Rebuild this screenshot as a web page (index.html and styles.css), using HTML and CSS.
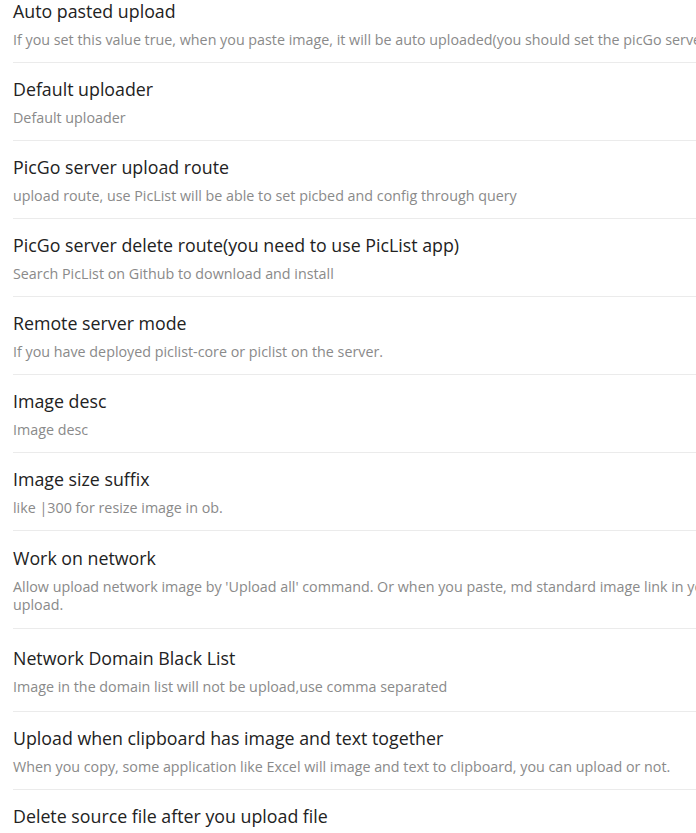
FILE: index.html
```html
<!DOCTYPE html>
<html lang="en">
<head>
<meta charset="utf-8">
<title>Settings</title>
<link rel="stylesheet" href="styles.css">
</head>
<body>
<div class="settings">
  <div class="setting-item">
    <div class="info">
      <div class="name">Auto pasted upload</div>
      <div class="desc">If you set this value true, when you paste image, it will be auto uploaded(you should set the picGo server rightly)</div>
    </div>
  </div>
  <div class="setting-item">
    <div class="info">
      <div class="name">Default uploader</div>
      <div class="desc">Default uploader</div>
    </div>
  </div>
  <div class="setting-item">
    <div class="info">
      <div class="name">PicGo server upload route</div>
      <div class="desc">upload route, use PicList will be able to set picbed and config through query</div>
    </div>
  </div>
  <div class="setting-item">
    <div class="info">
      <div class="name">PicGo server delete route(you need to use PicList app)</div>
      <div class="desc">Search PicList on Github to download and install</div>
    </div>
  </div>
  <div class="setting-item">
    <div class="info">
      <div class="name">Remote server mode</div>
      <div class="desc">If you have deployed piclist-core or piclist on the server.</div>
    </div>
  </div>
  <div class="setting-item">
    <div class="info">
      <div class="name">Image desc</div>
      <div class="desc">Image desc</div>
    </div>
  </div>
  <div class="setting-item">
    <div class="info">
      <div class="name">Image size suffix</div>
      <div class="desc">like |300 for resize image in ob.</div>
    </div>
  </div>
  <div class="setting-item two-line">
    <div class="info">
      <div class="name">Work on network</div>
      <div class="desc">Allow upload network image by 'Upload all' command. Or when you paste, md standard image link in your clipboard will be auto<br>upload.</div>
    </div>
  </div>
  <div class="setting-item with-textarea">
    <div class="info">
      <div class="name">Network Domain Black List</div>
      <div class="desc">Image in the domain list will not be upload,use comma separated</div>
    </div>
  </div>
  <div class="setting-item">
    <div class="info">
      <div class="name">Upload when clipboard has image and text together</div>
      <div class="desc">When you copy, some application like Excel will image and text to clipboard, you can upload or not.</div>
    </div>
  </div>
  <div class="setting-item">
    <div class="info">
      <div class="name">Delete source file after you upload file</div>
      <div class="desc">Delete source file in ob assets after you upload file.</div>
    </div>
  </div>
</div>
</body>
</html>
```

FILE: styles.css
```css
html, body {
  margin: 0;
  padding: 0;
  background: #ffffff;
  overflow: hidden;
}

body {
  font-family: "Open Sans", "Noto Sans", "Liberation Sans", sans-serif;
  color: #222222;
}

.settings {
  width: 1000px;
  margin-top: -16px;
  padding-left: 13px;
}

.setting-item {
  box-sizing: border-box;
  display: flex;
  align-items: center;
  min-height: 78px;
  padding: 14px 0 13px;
  border-top: 1px solid #ebebeb;
}

.setting-item.two-line {
  min-height: 98px;
}

.setting-item.with-textarea {
  min-height: 83px;
}

.info {
  flex: 1;
  min-width: 0;
}

.name {
  font-size: 17.8px;
  line-height: 24px;
  color: #222222;
  white-space: nowrap;
}

.desc {
  margin-top: 8px;
  font-size: 14.3px;
  line-height: 18px;
  color: #8a8a8a;
  white-space: nowrap;
}
```
